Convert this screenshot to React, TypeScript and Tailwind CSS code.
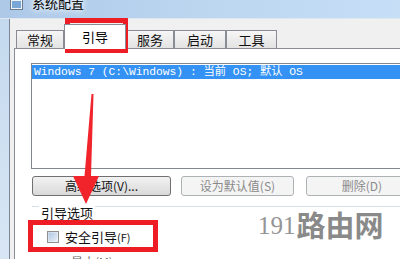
import React from 'react';

const ui = { fontFamily: '"Noto Sans CJK SC", "Liberation Sans", sans-serif' };

const Tab = ({ label, w, selected }: { label: string; w: number; selected?: boolean }) => (
  <div
    className={
      selected
        ? 'relative z-10 -mb-px h-[25px] border border-b-0 border-[#898c95] bg-white flex items-center justify-center text-[13px] text-black'
        : 'h-[18px] border border-b-0 border-[#898c95] bg-gradient-to-b from-[#f6f6f6] to-[#e3e3e3] flex items-center justify-center text-[13px] text-[#111]'
    }
    style={{ width: w }}
  >
    {label}
  </div>
);

const App = () => {
  return (
    <div className="relative w-[400px] h-[259px] overflow-hidden bg-[#f0f0f0]" style={ui}>
      {/* Title bar */}
      <div className="h-[19px] flex items-start bg-gradient-to-r from-[#adc9e8] via-[#bcd6f0] to-[#c6def6] border-b border-[#dfe8f1]">
        <svg className="ml-[10px] -mt-[2px] shrink-0" width="13" height="12" viewBox="0 0 13 12">
          <rect x="0.5" y="0.5" width="12" height="11" fill="#eef3f8" stroke="#6d7b8c" />
          <rect x="2" y="3" width="9" height="7" fill="#7aa7d6" />
        </svg>
        <span className="ml-[9px] -mt-[5px] text-[13px] leading-[16px] text-black [text-shadow:0_0_5px_#fff,0_0_8px_#fff]">
          系统配置
        </span>
      </div>

      <div className="flex h-[240px]">
        {/* Window frame */}
        <div className="w-[10px] shrink-0 bg-gradient-to-b from-[#c4d9ee] to-[#d8e6f4] border-r border-[#7b8796]" />

        {/* Dialog */}
        <div className="flex-1 min-w-0 pl-[4px] pt-[5px]">
          <div className="flex items-end pl-[2px]">
            <Tab label="常规" w={48} />
            <Tab label="引导" w={62} selected />
            <Tab label="服务" w={48} />
            <Tab label="启动" w={52} />
            <Tab label="工具" w={51} />
          </div>

          {/* Tab panel */}
          <div className="w-[420px] h-[230px] border border-[#898c95] bg-white pl-[16px] pt-[14px]">
            {/* OS list */}
            <div className="w-[400px] h-[106px] border border-[#828790] bg-white pt-px">
              <div
                className="h-[14px] bg-[#3392f3] text-white text-[11.3px] leading-[14px] pl-[2px] whitespace-nowrap"
                style={{ fontFamily: '"Liberation Mono", "Noto Sans CJK SC", monospace' }}
              >
                Windows 7 (C:\Windows) : 当前 OS; 默认 OS
              </div>
            </div>

            {/* Buttons */}
            <div className="mt-[7px] ml-px flex text-[12px]">
              <div className="w-[139px] h-[20px] rounded-[3px] border border-[#707070] bg-gradient-to-b from-[#f2f2f2] to-[#d9d9d9] flex items-center justify-center text-[#111]">
                高级选项(V)...
              </div>
              <div className="ml-[10px] w-[113px] h-[20px] rounded-[3px] border border-[#adb2b5] bg-[#f4f4f4] flex items-center justify-center text-[#8a8a8a]">
                设为默认值(S)
              </div>
              <div className="ml-[12px] w-[112px] h-[20px] rounded-[3px] border border-[#adb2b5] bg-[#f4f4f4] flex items-center justify-center text-[#8a8a8a]">
                删除(D)
              </div>
            </div>

            {/* Boot options group */}
            <div className="mt-[10px] ml-px w-[400px] border-t border-[#d5dfe5]">
              <div className="-mt-[2px] ml-[7px] w-fit bg-white px-[2px] text-[13px] leading-[15px] text-[#111]">
                引导选项
              </div>
              <div className="mt-[10px] ml-[15px] flex items-center gap-[6px] text-[13px] leading-[14px] text-[#111]">
                <div className="w-[12px] h-[12px] shrink-0 border border-[#8e8f8f] bg-gradient-to-br from-[#cbd9ea] to-[#f4f7fa] p-px">
                  <div className="w-full h-full bg-gradient-to-br from-[#b3c9e3] to-[#e6eef7]" />
                </div>
                <span>
                  安全引导<span className="text-[11px]">(F)</span>
                </span>
              </div>
              <div className="ml-[39px] mt-[11px] text-[12px] leading-[14px] text-[#666]">最小(M)</div>
            </div>
          </div>
        </div>
      </div>

      {/* Annotations */}
      <div className="absolute left-[65px] top-[18px] w-[63px] h-[35px] border-[5px] border-[#ee1c25]" />
      <div className="absolute left-[28px] top-[220px] w-[130px] h-[32px] border-[5px] border-[#ee1c25]" />
      <svg className="absolute left-0 top-0 pointer-events-none" width="400" height="259" viewBox="0 0 400 259">
        <polygon points="91.5,94 93.5,94 91,176 99,176 86,204 73,176 84.5,176" fill="#f2242b" />
      </svg>

      {/* Watermark */}
      <div className="absolute left-[258px] top-[207px] flex items-end text-[#8a8a8a] whitespace-nowrap">
        <span className="text-[25px] leading-[30px] mr-[1px] text-[#959595]" style={{ fontFamily: '"Liberation Serif", serif' }}>
          191
        </span>
        <span className="text-[29px] leading-[34px] font-bold" style={{ fontFamily: '"Noto Sans CJK SC", sans-serif' }}>
          路由网
        </span>
      </div>
    </div>
  );
};

export default App;
